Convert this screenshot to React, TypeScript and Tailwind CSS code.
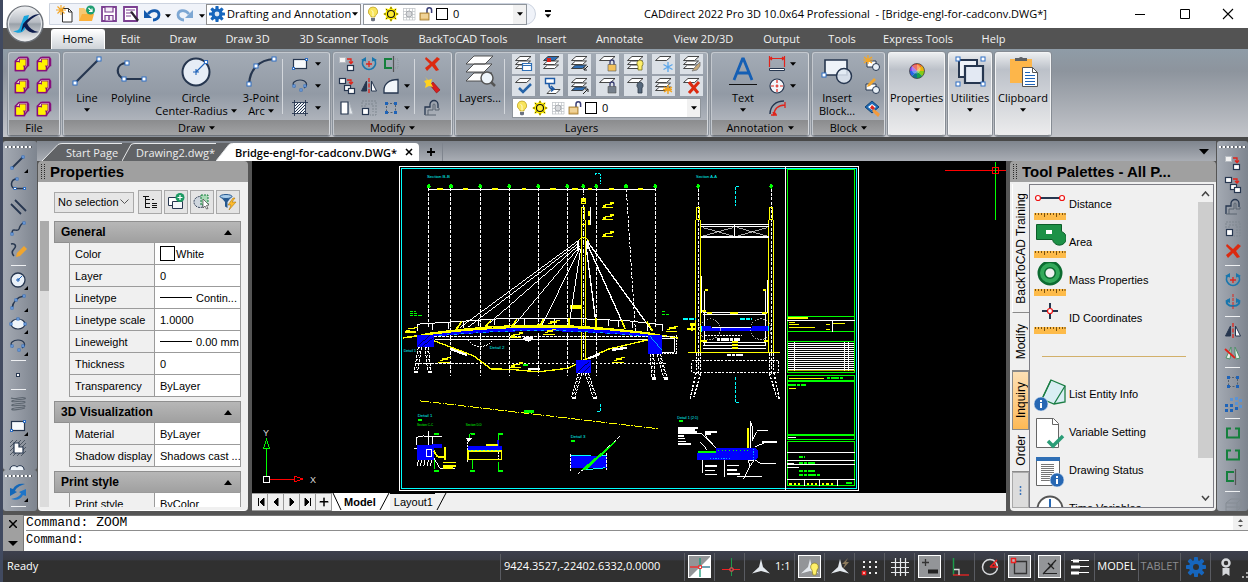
import type { ReactNode } from "react";

const NAVY = "#26364f";
const BLUE = "#1e63b8";
const RED = "#e0241b";
const GREEN = "#15803d";

/* ---------- shared drawing helpers ---------- */

function Svg({ s = 20, h, children, className = "" }: { s?: number; h?: number; children: ReactNode; className?: string }) {
  return (
    <svg width={s} height={h ?? s} viewBox={`0 0 ${s} ${h ?? s}`} fill="none" aria-hidden="true" className={`block shrink-0 ${className}`}>
      {children}
    </svg>
  );
}

function Handle({ x, y, r = 1.5 }: { x: number; y: number; r?: number }) {
  return <rect x={x - r} y={y - r} width={r * 2} height={r * 2} fill="#fff" stroke="#2f6fc4" />;
}

function Caret({ className = "" }: { className?: string }) {
  return (
    <svg width="6" height="4" viewBox="0 0 6 4" aria-hidden="true" className={`inline-block shrink-0 ${className}`}>
      <path d="M0 .3h6L3 3.8z" fill="currentColor" />
    </svg>
  );
}

/* ---------- general icons ---------- */

const Bulb = () => (
  <Svg s={14} h={16}>
    <path d="M7 1a4.6 4.6 0 0 0-2.8 8.3c.5.5.8 1 .8 1.7h4c0-.7.3-1.2.8-1.7A4.6 4.6 0 0 0 7 1z" fill="#f8e45c" stroke="#b79a16" strokeWidth=".7" />
    <path d="M5.5 4.5l1.5 1v5" stroke="#fffbd0" />
    <path d="M5 12h4v2.5l-1 .8H6l-1-.8z" fill="#6b7280" />
  </Svg>
);
const Sun = () => (
  <Svg s={16}>
    <path d="M8 0l2 3 3.6-.8L13 6l3 2-3 2 .6 3.8L10 13l-2 3-2-3-3.6.8L3 10 0 8l3-2-.6-3.8L6 3z" fill="#ffec00" />
    <circle cx="8" cy="8" r="3.5" fill="#ffee33" stroke="#111" strokeWidth="1.1" />
    <path d="M8 1v2M8 13v2M1 8h2M13 8h2M3 3l1.5 1.5M11.5 11.5L13 13M13 3l-1.5 1.5M4.5 11.5L3 13" stroke="#222" strokeWidth=".8" />
  </Svg>
);
const Freeze = () => (
  <Svg s={14}>
    <path d="M1.5 1v12M4.5 1v12M7.5 1v12M10.5 1v12M13 1v12M1 1.5h12M1 4.5h12M1 7.5h12M1 10.5h12M1 13h12" stroke="#c3c6ca" strokeWidth=".8" />
    <circle cx="7" cy="7" r="3" fill="#d7d9dc" stroke="#a8abb0" />
  </Svg>
);
const Unlock = () => (
  <Svg s={14} h={16}>
    <path d="M8 8V4a2.3 2.3 0 0 1 4.6 0v3" stroke="#3a3f77" strokeWidth="1.5" />
    <rect x="1" y="7" width="9" height="7" fill="#e8c27a" stroke="#9a7226" strokeWidth=".8" />
    <path d="M2 9h7M2 11h7" stroke="#f7e2b4" />
  </Svg>
);
const Swatch = () => <span className="block size-[12px] shrink-0 border border-black bg-white" />;

function GearIcon({ size = 16, color = "#1666bd", hole = "#dce8f5" }: { size?: number; color?: string; hole?: string }) {
  return (
    <svg width={size} height={size} viewBox="0 0 20 20" aria-hidden="true" className="block shrink-0">
      <g fill={color}>
        {[0, 45, 90, 135].map((a) => (
          <rect key={a} x="8" y="0" width="4" height="20" rx=".8" transform={`rotate(${a} 10 10)`} />
        ))}
        <circle cx="10" cy="10" r="7" />
      </g>
      <circle cx="10" cy="10" r="3" fill={hole} />
    </svg>
  );
}

const Copy1 = () => (
  <Svg s={18}>
    <rect x="1.5" y="2.5" width="6" height="5" fill="#f3f3f3" stroke="#b7bcc2" />
    <path d="M9 4h4v4M11 6.5l2 2 2-2" stroke={RED} strokeWidth="1.3" />
    <rect x="9.5" y="10.5" width="6" height="5" fill="#fff" stroke={NAVY} strokeWidth="1.2" />
  </Svg>
);
const Copy2 = () => (
  <Svg s={18}>
    <rect x="1.5" y="1.5" width="6" height="5" fill="#fff" stroke={NAVY} strokeWidth="1.2" />
    <path d="M9 3h4v3M11 5l2 2 2-2" stroke={RED} strokeWidth="1.3" />
    <rect x="6.5" y="8.5" width="6" height="5" fill="#fff" stroke={NAVY} strokeWidth="1.2" />
    <rect x="10.5" y="11.5" width="6" height="5" fill="#fff" stroke={NAVY} strokeWidth="1.2" />
  </Svg>
);
const Rotate = () => (
  <Svg s={18}>
    <path d="M3.5 4.5a6.5 6.5 0 1 0 11 0" stroke="#1976ad" strokeWidth="1.8" />
    <path d="M1 5l5-3v4.500zM17 5l-5-3v4.500z" fill="#1976ad" />
    <path d="M9 6v6M6 9h6" stroke={RED} strokeWidth="1.3" />
  </Svg>
);
const Rotate3D = () => (
  <Svg s={18}>
    <path d="M4 7c-3 3 0 6 5 6s8-3 5-6" stroke="#1976ad" strokeWidth="2" />
    <path d="M1 8l5-3v5zM17 8l-5-3v5z" fill="#1976ad" />
    <path d="M9 1v16" stroke={RED} strokeDasharray="3 1" />
  </Svg>
);
const Trim = () => (
  <Svg s={18}>
    <path d="M10 4H3v9h7" stroke={GREEN} strokeWidth="2" />
    <path d="M11.5 1v16" stroke="#555" strokeWidth="1.2" />
    <path d="M13 4h3v9h-3" stroke="#8b939a" strokeDasharray="1 1" />
  </Svg>
);
const BreakIcon = () => (
  <Svg s={18}>
    <path d="M7 4.5H3v9h12v-9h-4" stroke={GREEN} strokeWidth="2" />
  </Svg>
);
const Mirror = () => (
  <Svg s={18}>
    <path d="M6.5 4v10h-5z" fill={NAVY} stroke={NAVY} />
    <path d="M11.5 4v10h5z" fill="#f8fafc" stroke={NAVY} />
    <path d="M9 1v16" stroke={RED} strokeWidth="1.3" strokeDasharray="4 1.5" />
  </Svg>
);
const Mirror3D = () => (
  <Svg s={18}>
    <path d="M7 3l-5 11 4 1 1-6zM11 3l5 11-4 1-1-6z" fill="#e6efe9" stroke="#4f9068" />
    <path d="M1 5l10 9" stroke={RED} strokeWidth="1.8" />
  </Svg>
);
const Fillet = () => (
  <Svg s={18}>
    <path d="M2 16V13C2 7 7 2.5 16 2.5V16z" fill="#f2f6fa" stroke={NAVY} strokeWidth="1.3" />
  </Svg>
);
const Stretch = () => (
  <Svg s={18}>
    <path d="M11 3l4 12h-4z" fill="#e4e8ec" stroke="#b0b7bf" />
    <path d="M3 3h7v12H3z" fill="#fff" stroke={NAVY} strokeWidth="1.2" />
  </Svg>
);
const Scale = () => (
  <Svg s={18}>
    <path d="M2 8V2h14v14h-6M5 8V5h8v8" stroke="#7f878f" strokeDasharray="2 1" />
    <rect x="2.5" y="9.5" width="6" height="6" fill="#fff" stroke={NAVY} strokeWidth="1.2" />
  </Svg>
);
const ArrayIcon = () => (
  <Svg s={18}>
    <path d="M4.5 4.5h9v9h-9z" stroke="#55606c" strokeDasharray="2 1.5" />
    <path d="M3 3h3v3H3zM12 3h3v3h-3zM3 12h3v3H3zM12 12h3v3h-3z" fill={BLUE} />
  </Svg>
);
const ArrayDense = () => (
  <Svg s={18}>
    <path d="M1 9h3v3H1zM1 14h3v3H1zM6 9h3v3H6zM6 14h3v3H6zM11 12h3v3h-3z" fill={BLUE} />
    <path d="M6 3h3v3H6zM11 2h3v3h-3zM11 7h3v3h-3zM15 4h3v3h-3zM15 10h3v3h-3z" fill="#5b93d4" />
  </Svg>
);
const CrossRed = () => (
  <Svg s={18}>
    <path d="M3 2l6 5 5-5 3 2-5 5 4 6-3 1-4-5-5 5-2-3 5-4-5-5z" fill="#dc2a10" />
  </Svg>
);
const Explode = () => (
  <Svg s={18}>
    <path d="M7 8l3-3 7 8-3.500 3z" fill="#d81e1e" stroke="#8d1010" strokeWidth=".6" />
    <path d="M2 0l3 3 4-1-1 4 2 4-4-1-4 2 1-4-2-3 3-1z" fill="#ffd21f" />
  </Svg>
);
const Offset = () => (
  <Svg s={18}>
    <path d="M2 16V8h5V5.5a4 4 0 0 1 8 0V9" stroke={NAVY} strokeWidth="1.3" />
    <path d="M5 16v-5h5V6a1 1 0 0 1 2 0v5h4v-2M2 16h11" stroke="#5b6571" />
  </Svg>
);
const LineI = ({ big = false }: { big?: boolean }) =>
  big ? (
    <Svg s={32}>
      <path d="M4 28L28 4" stroke={NAVY} strokeWidth="2.2" />
      <Handle x={4} y={28} r={2} />
      <Handle x={28} y={4} r={2} />
    </Svg>
  ) : (
    <Svg s={18}>
      <path d="M3 14L14 3" stroke={NAVY} strokeWidth="1.8" />
      <Handle x={3} y={14} r={1} />
      <Handle x={14} y={3} r={1} />
    </Svg>
  );
const PolyI = () => (
  <Svg s={18}>
    <path d="M8 3C1 3 1 12 6 12.5h10" stroke={NAVY} strokeWidth="1.5" />
    <Handle x={8} y={3} r={1} />
    <Handle x={6} y={12.5} r={1} />
    <Handle x={15.5} y={12.5} r={1} />
  </Svg>
);
const Parallel = () => (
  <Svg s={18}>
    <path d="M2 6l10 10M6 2l11 11" stroke={NAVY} strokeWidth="1.8" />
    <path d="M4 4l11 11" stroke="#8a949f" strokeDasharray="1 2" />
  </Svg>
);
const Spline = () => (
  <Svg s={18}>
    <path d="M3 14c0-8 5-1 7-5 1-3 2-6 5-6" stroke={NAVY} strokeWidth="1.5" />
    <Handle x={3} y={14} r={1} />
    <Handle x={15} y={3} r={1} />
  </Svg>
);
const Sketch = () => (
  <Svg s={18}>
    <path d="M2 2c4-1 6 2 3 5s-2 5 0 7" stroke={NAVY} strokeWidth="1.5" />
    <path d="M7 15l1-4 7-7 3 3-7 7z" fill="#f0a52e" />
  </Svg>
);
const CircleS = () => (
  <Svg s={18}>
    <circle cx="9" cy="9" r="7" fill="#e9f0f8" stroke={NAVY} strokeWidth="1.3" />
    <path d="M9 7v4M7 9h4M9 9l4-4" stroke={BLUE} />
  </Svg>
);
const ArcS = () => (
  <Svg s={18}>
    <path d="M3 16C4 8 8 4 15 3" stroke={NAVY} strokeWidth="1.5" />
    <Handle x={3} y={15} r={1} />
    <Handle x={7} y={7} r={1} />
    <Handle x={15} y={3} r={1} />
  </Svg>
);
const EllipseI = () => (
  <Svg s={18}>
    <ellipse cx="9" cy="9" rx="7" ry="5" fill="#eef4fa" stroke={NAVY} strokeWidth="1.2" />
    <Handle x={2} y={9} r={1} />
    <Handle x={16} y={9} r={1} />
    <Handle x={9} y={4} r={1} />
  </Svg>
);
const EllArc = () => (
  <Svg s={18}>
    <path d="M4 10C-1 6 5 3 9 3c6 0 9 5 4 8" stroke={NAVY} strokeWidth="1.2" />
    <Handle x={3} y={9} r={1} />
    <Handle x={10} y={13} r={1} />
    <Handle x={14} y={9} r={1} />
  </Svg>
);
const PointI = () => (
  <Svg s={18}>
    <rect x="7.5" y="7.5" width="3" height="3" fill="#fff" stroke={NAVY} />
  </Svg>
);
const Helix = () => (
  <Svg s={18}>
    <path d="M2 3c4 2 11-2 14 0s-11 1-13 3 12-1 13 1-11 1-13 3 12-1 13 1-11 1-13 3 10 0 13-1" stroke="#5d6670" strokeWidth="1.1" />
  </Svg>
);
const RectI = () => (
  <Svg s={18}>
    <rect x="2.5" y="4.5" width="13" height="9" fill="#f6f9fc" stroke={NAVY} strokeWidth="1.2" />
    <Handle x={2.5} y={13.5} r={1} />
    <Handle x={15.5} y={4.5} r={1} />
  </Svg>
);
const Region = () => (
  <Svg s={18}>
    <path d="M1 4l3-3M1 8l7-7M1 12l11-11M1 16L16 1M4 17L17 4M8 17l9-9M12 17l5-5" stroke="#46505c" strokeWidth=".9" />
    <path d="M5 4h5v4h4v6H5z" fill="#fff" stroke={NAVY} strokeWidth="1.2" />
  </Svg>
);
const Hatch = () => (
  <Svg s={18}>
    <path d="M3.5 3.5h11v11h-11z" fill="#eef2f6" />
    <path d="M1 3.5h16M1 14.5h16M3.5 1v16M14.5 1v16" stroke={NAVY} strokeWidth=".9" />
    <path d="M4 7l3-3M4 10l6-6M4 13l9-9M6 14l8-8M9 14l5-5M12 14l2-2" stroke={NAVY} />
  </Svg>
);
const Cloud = () => (
  <Svg s={18}>
    <path d="M1 8a4 4 0 0 1 7-2 4 4 0 0 1 7 2v5H1z" fill="#eef4fa" stroke={NAVY} />
  </Svg>
);
const Regen = () => (
  <Svg s={20}>
    <path d="M17 2C11 1 7 3 5 7L2 6v8l7-4-2-1c1-3 4-5 10-7z" fill="#1367b8" />
    <path d="M3 17c6 2 10 0 12-4l3 1V7l-7 3 2 1.500C12 14 9 16 3 17z" fill="#1f75c8" />
  </Svg>
);
const Cube = () => (
  <Svg s={16}>
    <path d="M6 1.500h7l1.500 1.500v6.500H13L10.500 12" fill="#fff6a0" stroke="#86107c" strokeWidth="1.500" />
    <path d="M1.500 5L5 1.500h8.500V10L10 14.500H1.500z" fill="#fffbd6" stroke="#86107c" strokeWidth="1.500" />
    <rect x="1.500" y="5.500" width="9" height="9" fill="#fff200" stroke="#86107c" strokeWidth="1.500" />
    <rect x="5.500" y="3" width="6.500" height="7" fill="#fff200" stroke="#86107c" strokeWidth=".8" />
    <rect x="2.500" y="6.500" width="6.500" height="7" fill="#fff200" />
  </Svg>
);
const InfoDot = ({ x, y }: { x: number; y: number }) => (
  <g>
    <circle cx={x} cy={y} r="7" fill="#2667b3" stroke="#dbe7f3" strokeWidth=".6" />
    <rect x={x - 1} y={y - 1} width="2" height="5" fill="#fff" />
    <rect x={x - 1} y={y - 4} width="2" height="2" fill="#fff" />
  </g>
);

/* ---------- layer button icons ---------- */

function Stack({ fill = "#fff", kind }: { fill?: string; kind: string }) {
  const one = ["check", "lock", "off", "frost", "del", "unlock", "cur"].includes(kind);
  return (
    <Svg s={20} h={18}>
      {!one && <path d="M1.5 13.5l4-3.5h11l-4 3.5z" fill={kind === "dn" || kind === "up" ? "#2f6fb5" : "#fff"} stroke="#333" strokeWidth=".9" />}
      {!one && <path d="M1.5 9.5l4-3.5h11l-4 3.5z" fill="#fff" stroke="#333" strokeWidth=".9" />}
      {kind !== "cur" && <path d="M1.5 5.5L6 1.5h11l-4.5 4z" fill={fill} stroke="#333" strokeWidth=".9" />}
      {kind === "win" && <path d="M8.5 8.5h9v7h-9zM8.5 10.5h9" fill="#fff" stroke="#2f6fb5" strokeWidth="1.2" />}
      {kind === "iso" && <path d="M5 3h4v4H5z" fill={RED} />}
      {kind === "check" && <path d="M5 11l4 4 8-8" stroke="#2764a8" strokeWidth="2.5" />}
      {kind === "dn" && <path d="M18 11l-4 4m0-3v3h3" stroke="#222" />}
      {kind === "up" && <path d="M13 17l5-5m-3 0h3v3" stroke="#222" />}
      {(kind === "lock" || kind === "unlock") && (
        <g>
          <path d="M12 10V7a2 2 0 0 1 4 0v3" stroke="#34386c" strokeWidth="1.3" />
          <path d="M10 9.5h8V16h-8z" fill={kind === "lock" ? "#f2c15c" : "#76808c"} stroke="#555" strokeWidth=".6" />
        </g>
      )}
      {kind === "bulb" && <path d="M14 5a3.5 3.5 0 0 0-2 6v4h4v-4a3.5 3.5 0 0 0-2-6z" fill="#fff06a" stroke="#77701c" strokeWidth=".8" />}
      {kind === "off" && <path d="M14 5a3.5 3.5 0 0 0-2 6v5h4v-5a3.5 3.5 0 0 0-2-6z" fill="#56687c" stroke="#2f3b48" strokeWidth=".8" />}
      {kind === "frost" && <path d="M14 7v10M9.5 9.5l9 5M18.5 9.5l-9 5" stroke="#5aa6ea" strokeWidth="1.3" />}
      {kind === "thaw" && <path d="M14 8v9M10 10l8 5M18 10l-8 5M9 12.5h9" stroke="#f2a21b" strokeWidth="1.4" />}
      {kind === "brush" && <path d="M18 7l-5 5-3 4 5-1 3-4z" fill="#c7a878" stroke="#777" strokeWidth=".8" />}
      {kind === "del" && <path d="M7 5l9 11M17 5L7 16" stroke="#dc2a10" strokeWidth="3" />}
      {kind === "cur" && (
        <g>
          <path d="M5 16.500l4-4h9l-4 4z" fill="#fff" stroke="#333" strokeWidth=".9" />
          <path d="M3.500 1.500h9v5h-9z" fill="#fff" stroke="#1d5aa6" strokeWidth="1.400" />
          <path d="M7 7c0 4 2 5 4 5m-2-3l3 3-3 2.500" stroke="#1d5aa6" strokeWidth="1.600" />
        </g>
      )}
    </Svg>
  );
}

/* ---------- ribbon ---------- */

function Group({ label, className, caret = true, children }: { label: string; className: string; caret?: boolean; children: ReactNode }) {
  return (
    <section className={`flex h-[84px] shrink-0 flex-col overflow-hidden rounded-[3px] border border-[#c3c8ce] border-b-[#6f747b] border-r-[#d5d8dc] bg-linear-to-b from-[#a3abb5] via-[#929aa5] to-[#bfc2c8] shadow-[0_0_0_1px_#8b929b] ${className}`}>
      <div className="flex min-h-0 flex-1">{children}</div>
      <h2 className="flex h-[15px] shrink-0 items-center justify-center gap-1 bg-linear-to-b from-[#8b8c8e] to-[#a2a3a5] text-[11px] leading-[15px]">
        {label}
        {caret && <Caret />}
      </h2>
    </section>
  );
}

function BigButton({ icon, lines, className, caret = false, inlineCaret = false }: { icon: ReactNode; lines: string[]; className: string; caret?: boolean; inlineCaret?: boolean }) {
  return (
    <button type="button" className={`flex shrink-0 flex-col items-center whitespace-nowrap text-[11px] leading-[13px] ${className}`}>
      <span className="mb-[2px] flex h-[36px] items-center">{icon}</span>
      {lines.map((l, i) => (
        <span key={l} className="flex items-center gap-[3px]">
          {l}
          {inlineCaret && i === lines.length - 1 && <Caret />}
        </span>
      ))}
      {caret && <Caret className="mt-1" />}
    </button>
  );
}

function Cell({ label, children, className = "w-[22px]" }: { label: string; children?: ReactNode; className?: string }) {
  return (
    <button type="button" aria-label={label} className={`flex h-[22px] shrink-0 items-center justify-center ${className}`}>
      {children}
    </button>
  );
}

function Divider() {
  return <span className="my-[6px] w-px shrink-0 bg-[#d3d7dc]" />;
}

function CollapsedGroup({ icon, label, className }: { icon: ReactNode; label: string; className: string }) {
  return (
    <button type="button" className={`flex h-[84px] shrink-0 flex-col items-center overflow-hidden rounded-[3px] border border-[#f3f4f5] border-b-[#7d8288] bg-linear-to-b from-[#eceef0] via-[#bcc1c9] via-20% to-[#ececed] text-[11px] leading-[13px] shadow-[0_0_0_1px_#868c94] ${className}`}>
      <span className="mb-[2px] flex h-[36px] items-center">{icon}</span>
      <span>{label}</span>
      <Caret className="mt-1" />
    </button>
  );
}

const layerButtons: { label: string; kind: string; fill?: string }[] = [
  { label: "Layer states", kind: "win" },
  { label: "Isolate layer", kind: "iso", fill: "#2f6fb5" },
  { label: "Layer down", kind: "dn" },
  { label: "Lock layer", kind: "lock" },
  { label: "Layer on", kind: "bulb" },
  { label: "Freeze layer", kind: "frost" },
  { label: "Match layer", kind: "brush" },
  { label: "Make current", kind: "check" },
  { label: "Move to current layer", kind: "cur" },
  { label: "Layer up", kind: "up" },
  { label: "Unlock layer", kind: "unlock" },
  { label: "Layer off", kind: "off" },
  { label: "Thaw layers", kind: "thaw" },
  { label: "Delete layer", kind: "del" },
];

function LayerCombo({ className, label }: { className: string; label: string }) {
  return (
    <div className={`flex items-center gap-[3px] border border-[#8f959c] bg-white pl-[2px] ${className}`}>
      <Bulb />
      <Sun />
      <Freeze />
      <Unlock />
      <Swatch />
      <select aria-label={label} className="h-full min-w-0 flex-1 appearance-none bg-transparent pl-[2px] text-[11px] outline-none">
        <option>0</option>
      </select>
      <span className="flex h-full w-[13px] items-center justify-center bg-[#f1f1f1]">
        <Caret />
      </span>
    </div>
  );
}

function Ribbon() {
  return (
    <div className="flex h-[88px] shrink-0 gap-[3px] overflow-hidden bg-linear-to-b from-[#8f9ca7] via-[#8d949d] via-25% to-[#c3c5ca] pl-[5px] pt-[3px]">
      <Group label="File" className="w-[52px]" caret={false}>
        <div className="grid grid-cols-2 pl-[2px]">
          {["New", "Open", "Save", "Import", "Export", "Plot"].map((n) => (
            <Cell key={n} label={n}>
              <Cube />
            </Cell>
          ))}
        </div>
      </Group>

      <Group label="Draw" className="w-[267px]">
        <BigButton className="w-[46px]" caret lines={["Line"]} icon={<LineI big />} />
        <BigButton
          className="w-[42px]"
          lines={["Polyline"]}
          icon={
            <Svg s={32}>
              <path d="M12 8C0 8 0 22 10 24h18" stroke={NAVY} strokeWidth="2.2" />
              <Handle x={12} y={8} r={2} />
              <Handle x={9} y={24} r={2} />
              <Handle x={29} y={24} r={2} />
            </Svg>
          }
        />
        <BigButton
          className="w-[88px]"
          inlineCaret
          lines={["Circle", "Center-Radius"]}
          icon={
            <Svg s={32}>
              <circle cx="16" cy="17" r="13.5" fill="#e6edf6" stroke={NAVY} strokeWidth="2" />
              <path d="M16 14v6M13 17h6M16 17l10-10" stroke={BLUE} strokeWidth="1.1" />
              <Handle x={26} y={7} r={1.5} />
            </Svg>
          }
        />
        <BigButton
          className="w-[42px]"
          inlineCaret
          lines={["3-Point", "Arc"]}
          icon={
            <Svg s={32}>
              <path d="M4 29C5 14 14 5 29 4" stroke={NAVY} strokeWidth="2.2" />
              <Handle x={4} y={29} r={2} />
              <Handle x={11} y={11} r={2} />
              <Handle x={29} y={4} r={2} />
            </Svg>
          }
        />
        <Divider />
        <div className="ml-[4px] grid grid-cols-[26px_10px] content-start">
          <Cell label="Rectangle" className="w-[26px]"><RectI /></Cell>
          <Cell label="Rectangle options" className="w-[10px]"><Caret /></Cell>
          <Cell label="Ellipse arc" className="w-[26px]"><EllArc /></Cell>
          <Cell label="Ellipse options" className="w-[10px]"><Caret /></Cell>
          <Cell label="Hatch" className="w-[26px]"><Hatch /></Cell>
          <Cell label="Hatch options" className="w-[10px]"><Caret /></Cell>
        </div>
      </Group>

      <Group label="Modify" className="w-[119px]">
        <div className="grid grid-cols-[22px_22px_22px_10px] content-start pl-[2px]">
          <Cell label="Move"><Copy1 /></Cell>
          <Cell label="Rotate"><Rotate /></Cell>
          <Cell label="Trim"><Trim /></Cell>
          <span />
          <Cell label="Copy"><Copy2 /></Cell>
          <Cell label="Mirror"><Mirror /></Cell>
          <Cell label="Fillet"><Fillet /></Cell>
          <Cell label="Fillet options" className="w-[10px]"><Caret /></Cell>
          <Cell label="Stretch"><Stretch /></Cell>
          <Cell label="Scale"><Scale /></Cell>
          <Cell label="Array"><ArrayIcon /></Cell>
          <Cell label="Array options" className="w-[10px]"><Caret /></Cell>
        </div>
        <span className="w-[2px]" />
        <Divider />
        <div className="ml-[6px]">
          <Cell label="Erase"><CrossRed /></Cell>
          <Cell label="Explode"><Explode /></Cell>
          <Cell label="Offset"><Offset /></Cell>
        </div>
      </Group>

      <Group label="Layers" className="w-[253px]" caret={false}>
        <BigButton
          className="w-[48px]"
          lines={["Layers..."]}
          icon={
            <Svg s={32} h={34}>
              <path d="M2 27l8-8h18l-8 8zM2 18l8-8h18l-8 8zM2 10l8-8h19l-8 8z" fill="#fff" stroke="#444" strokeWidth=".9" />
              <circle cx="23" cy="24" r="6" fill="#eef5fb" stroke="#555" strokeWidth="1.5" />
              <path d="M27 28l4 4" stroke="#555" strokeWidth="2.5" />
            </Svg>
          }
        />
        <Divider />
        <div className="ml-[7px] flex flex-col pt-px">
          <div className="grid grid-cols-7 gap-x-[5px] gap-y-[2px]">
            {layerButtons.map((b) => (
              <button key={b.kind} type="button" aria-label={b.label} className="flex h-[20px] w-[23px] items-center justify-center bg-[#dbe0e6]">
                <Stack kind={b.kind} fill={b.fill} />
              </button>
            ))}
          </div>
          <LayerCombo label="Current layer" className="mt-[2px] h-[20px] w-[189px]" />
        </div>
      </Group>

      <Group label="Annotation" className="w-[98px]">
        <BigButton
          className="ml-[8px] w-[46px]"
          caret
          lines={["Text"]}
          icon={
            <Svg s={30}>
              <path d="M6 24L14.5 3h1L24 24M9 17h12" stroke="#155fb4" strokeWidth="2.8" />
              <path d="M1 28.5h28" stroke="#111" />
            </Svg>
          }
        />
        <div className="grid grid-cols-[22px_10px] content-start">
          <Cell label="Dimension">
            <Svg s={18}>
              <path d="M1.5 1v11M16.5 1v11M1.5 3.5h15M4 2L2 3.5 4 5M14 2l2 1.5L14 5" stroke={RED} strokeWidth="1.2" />
              <path d="M1.5 13.5h15v2h-15z" fill="#fff" stroke={NAVY} />
            </Svg>
          </Cell>
          <Cell label="Dimension options" className="w-[10px]"><Caret /></Cell>
          <Cell label="Center mark">
            <Svg s={18}>
              <circle cx="9" cy="9" r="7" fill="#f3f6fa" stroke={NAVY} strokeWidth="1.2" />
              <path d="M9 3v12M3 9h12" stroke={RED} strokeDasharray="3 1.5" strokeWidth="1.2" />
            </Svg>
          </Cell>
          <Cell label="Center mark options" className="w-[10px]"><Caret /></Cell>
          <Cell label="Arc length">
            <Svg s={18}>
              <path d="M2 15C2 7 8 2 16 2" stroke={NAVY} strokeWidth="1.5" />
              <path d="M6 16c0-6 4-10 11-10M17 3v6M3 16h6M5 13l1 3 2-2" stroke={RED} strokeWidth="1.3" />
            </Svg>
          </Cell>
        </div>
      </Group>

      <Group label="Block" className="w-[73px]">
        <BigButton
          className="w-[48px]"
          lines={["Insert", "Block..."]}
          icon={
            <Svg s={32}>
              <path d="M4 5h22v15H4z" fill="#eef3f9" stroke={NAVY} strokeWidth="1.6" />
              <circle cx="23" cy="21" r="7.5" fill="#e1e9f3" fillOpacity=".85" stroke={NAVY} strokeWidth="1.5" />
              <Handle x={3} y={20} r={2} />
            </Svg>
          }
        />
        <div>
          <Cell label="Create block">
            <Svg s={18}>
              <path d="M4 6h9v6H4z" fill="#fff" stroke={NAVY} />
              <circle cx="13" cy="12" r="3.5" fill="#e8eff6" stroke={NAVY} />
              <path d="M5 0v9M1 2l8 6M9 2L1 8M0 5h10" stroke="#f5a623" strokeWidth="1.2" />
            </Svg>
          </Cell>
          <Cell label="Edit block">
            <Svg s={18}>
              <path d="M3 7h10v6H3z" fill="#fff" stroke={NAVY} />
              <circle cx="13" cy="13" r="3.5" fill="#e8eff6" stroke={NAVY} />
              <path d="M4 10l1-3 6-6 2 2-6 6z" fill="#f0a52e" />
            </Svg>
          </Cell>
          <Cell label="Block attributes">
            <Svg s={18}>
              <path d="M2 8l7-6 7 6-7 6z" fill="#1f6bb5" stroke="#114477" />
              <path d="M5 8l4-3 4 3-4 3z" fill="#fff" />
              <path d="M9 6l3 3-2 2-3-2z" fill={RED} />
              <path d="M11 10l6 5-2 3-6-6z" fill="#f39a3d" />
            </Svg>
          </Cell>
        </div>
      </Group>

      <CollapsedGroup
        label="Properties"
        className="w-[57px]"
        icon={
          <Svg s={18}>
            {["#f97316", "#eab308", "#84cc16", "#16a34a", "#0e7490", "#2563eb", "#7c3aed", "#dc2626"].map((c, i) => (
              <path key={c} d="M9 9V1.500a7.500 7.500 0 0 1 5.300 2.200z" fill={c} transform={`rotate(${i * 45} 9 9)`} />
            ))}
            <circle cx="9" cy="9" r="7.5" stroke="#444" strokeWidth=".8" />
            <circle cx="8" cy="7" r="4.5" fill="#fff" fillOpacity=".35" />
          </Svg>
        }
      />
      <CollapsedGroup
        label="Utilities"
        className="w-[44px]"
        icon={
          <Svg s={32}>
            <path d="M5 5h18v17H5z" fill="#eef2f8" stroke={NAVY} strokeWidth="2" />
            <path d="M11 11h18v17H11z" fill="#e3e9f3" stroke={NAVY} strokeWidth="2.2" />
            <Handle x={4} y={4} r={2} />
            <Handle x={29} y={4} r={2} />
            <Handle x={4} y={29} r={2} />
            <Handle x={29} y={29} r={2} />
          </Svg>
        }
      />
      <CollapsedGroup
        label="Clipboard"
        className="w-[56px]"
        icon={
          <Svg s={32}>
            <path d="M3 4h22v24H3z" fill="#fdb64a" />
            <path d="M8 6V3h4a2.5 2.5 0 0 1 4 0h4v3z" fill="#5d6064" />
            <path d="M15.5 12.5h10l5 5v14h-15z" fill="#fff" stroke="#555" />
            <path d="M25.5 12.5v5h5" stroke="#555" />
            <path d="M18 17.5h5M18 20.5h10M18 23.5h10M18 26.5h10M18 29.5h10" stroke="#1e63b8" />
          </Svg>
        }
      />
    </div>
  );
}

/* ---------- title bar & menu ---------- */

function TitleBar() {
  return (
    <header className="relative flex h-[28px] shrink-0 items-center bg-white pl-[46px]">
      <button type="button" aria-label="Application menu" className="absolute left-[3px] top-[5px] z-10 size-[38px]">
        <svg viewBox="0 0 38 38" className="block size-full" aria-hidden="true">
          <defs>
            <linearGradient id="orb" x1="0" y1="0" x2="0" y2="1">
              <stop offset="0" stopColor="#f2f3f5" />
              <stop offset=".45" stopColor="#b7bcc3" />
              <stop offset=".5" stopColor="#9aa1a9" />
              <stop offset="1" stopColor="#f4f5f6" />
            </linearGradient>
          </defs>
          <circle cx="19" cy="19" r="18" fill="url(#orb)" stroke="#6b7077" strokeWidth="1.2" />
          <circle cx="19" cy="19" r="16.5" fill="none" stroke="#e9ebee" />
          <path d="M18 11l5-1-4 14c-2 4-7 5-12 2 4 0 6-1 7-4z" fill="#18a5dd" />
          <path d="M34 9c-7 3-12 7-15 12l-4 6 2-8C21 14 27 9 34 9zM18 19l3-1c2 5 6 8 12 9-7 2-12 0-15-6z" fill="#0d1c4d" />
        </svg>
      </button>

      <div className="flex h-[22px] shrink-0 items-center rounded-r-full border border-[#ccd3df] bg-[#f0f3f9] pl-[6px] pr-[8px]">
        <button type="button" aria-label="New" className="w-[22px]">
          <Svg s={18}>
            <path d="M6.5 3.5h6l3.5 3.5v10H6.5z" fill="#fff" stroke="#333" />
            <path d="M12.5 3.5V7H16" stroke="#333" />
            <path d="M5 0v10M1.5 1.5l7 7M8.5 1.5l-7 7M0 5h10" stroke="#f5a623" strokeWidth="1.1" />
          </Svg>
        </button>
        <button type="button" aria-label="Open" className="w-[23px]">
          <Svg s={18}>
            <path d="M1 3h5l2 2h5v11H1z" fill="#f7c873" />
            <path d="M4 9h12l-2 7H1z" fill="#fbb03b" />
            <circle cx="12.5" cy="5" r="4.5" fill="#1f9e72" />
            <path d="M10.5 3l3.5 3.5m0-3v3h-3" stroke="#fff" strokeWidth="1.2" />
          </Svg>
        </button>
        <button type="button" aria-label="Save" className="w-[22px]">
          <Svg s={16}>
            <path d="M1 1h14v14H1z" fill="#fff" stroke="#7b3f91" strokeWidth="1.8" />
            <path d="M4 1h8v5H4zM4 9.500h8V15H4z" fill="#f4edf7" stroke="#7b3f91" strokeWidth="1.2" />
            <path d="M8 10v4" stroke="#7b3f91" strokeWidth="1.5" />
          </Svg>
        </button>
        <button type="button" aria-label="Save as" className="w-[20px]">
          <Svg s={17} h={16}>
            <path d="M1 1h13v14H1z" fill="#fff" stroke="#7b3f91" strokeWidth="1.8" />
            <path d="M3 4h9M3 7h7M3 10h5" stroke="#7b3f91" />
            <path d="M7 6l2-1 7 9-2 1.500z" fill="#2c2330" />
          </Svg>
        </button>
        <button type="button" aria-label="Undo" className="w-[20px]">
          <Svg s={18}>
            <path d="M5 9c4-5 11-4 11 1 0 3-3 5-6 5" stroke="#1259ad" strokeWidth="2.8" />
            <path d="M1 5v8h8z" fill="#1259ad" />
          </Svg>
        </button>
        <button type="button" aria-label="Undo list" className="w-[10px]"><Caret /></button>
        <button type="button" aria-label="Redo" className="w-[24px] pl-[3px]">
          <Svg s={18}>
            <path d="M13 9C9 4 2 5 2 10c0 3 3 5 6 5" stroke="#7da7d3" strokeWidth="2.8" />
            <path d="M17 5v8H9z" fill="#7da7d3" />
          </Svg>
        </button>
        <button type="button" aria-label="Redo list" className="w-[9px]"><Caret /></button>
        <div className="flex h-[21px] w-[155px] items-center border border-[#8f8f8f] bg-white pl-[2px]">
          <GearIcon />
          <select aria-label="Workspace" className="h-full min-w-0 flex-1 appearance-none bg-white pl-[2px] text-[11px] outline-none">
            <option>Drafting and Annotation</option>
          </select>
          <Caret className="mr-[2px]" />
        </div>
        <LayerCombo label="Layer" className="ml-[2px] h-[21px] w-[164px]" />
      </div>
      <button type="button" aria-label="Customize quick access" className="ml-[8px] flex w-[8px] shrink-0 flex-col items-center">
        <span className="mb-[2px] h-[2px] w-[6px] bg-black" />
        <Caret />
      </button>
      <h1 className="ml-[92px] min-w-0 flex-1 truncate whitespace-pre text-[11px]">CADdirect 2022 Pro 3D 10.0x64 Professional  - [Bridge-engl-for-cadconv.DWG*]</h1>
      <button type="button" aria-label="Minimize" className="flex w-[45px] justify-center">
        <Svg s={12}><path d="M1 6.5h10" stroke="#000" /></Svg>
      </button>
      <button type="button" aria-label="Maximize" className="flex w-[45px] justify-center">
        <Svg s={12}><path d="M1.5 1.5h9v9h-9z" stroke="#000" /></Svg>
      </button>
      <button type="button" aria-label="Close" className="flex w-[41px] justify-center">
        <Svg s={12}><path d="M1 1l10 10M11 1L1 11" stroke="#000" strokeWidth="1.1" /></Svg>
      </button>
    </header>
  );
}

const menuTabs: [string, string][] = [
  ["Edit", "w-[50px]"],
  ["Draw", "w-[55px]"],
  ["Draw 3D", "w-[74px]"],
  ["3D Scanner Tools", "w-[119px]"],
  ["BackToCAD Tools", "w-[119px]"],
  ["Insert", "w-[58px]"],
  ["Annotate", "w-[78px]"],
  ["View 2D/3D", "w-[90px]"],
  ["Output", "w-[66px]"],
  ["Tools", "w-[55px]"],
  ["Express Tools", "w-[97px]"],
  ["Help", "w-[54px]"],
];

function MenuBar() {
  return (
    <nav className="flex h-[21px] shrink-0 items-end bg-[#535353] pl-[48px] text-[11px] text-[#f2f2f2]">
      <button type="button" className="h-[20px] w-[54px] rounded-t-[3px] border border-b-0 border-white bg-linear-to-b from-white to-[#ced3d8] text-black">Home</button>
      {menuTabs.map(([t, w]) => (
        <button key={t} type="button" className={`h-[20px] shrink-0 whitespace-nowrap pl-px ${w}`}>{t}</button>
      ))}
    </nav>
  );
}

/* ---------- document tabs ---------- */

function SlantEdge({ w, fill, back }: { w: number; fill: string; back: string }) {
  return (
    <svg width={w} height="18" viewBox={`0 0 ${w} 18`} aria-hidden="true" className="block shrink-0">
      <path d="M0 0h30v18H0z" fill={back} />
      <path d={`M0 18L${w - 4} 1.500Q${w - 2} 0 ${w} 0V18z`} fill={fill} />
      <path d={`M0 18L${w - 4} 1.500Q${w - 2} .5 ${w} .5`} fill="none" stroke="#e6e8ea" />
    </svg>
  );
}

function DocTabs() {
  return (
    <div className="flex h-[20px] shrink-0 items-end bg-linear-to-b from-[#7f858e] to-[#a9adb4] pl-[5px] text-[11px] text-[#ededed]">
      <div className="flex h-[18px] items-center">
        <SlantEdge w={20} fill="#616366" back="transparent" />
        <button type="button" className="h-[18px] w-[60px] whitespace-nowrap border-t border-[#e6e8ea] bg-[#616366] leading-[17px]">Start Page</button>
        <SlantEdge w={13} fill="#616366" back="#616366" />
        <button type="button" className="h-[18px] w-[81px] whitespace-nowrap border-t border-[#e6e8ea] bg-[#616366] leading-[17px]">Drawing2.dwg*</button>
        <SlantEdge w={17} fill="#fff" back="#616366" />
        <button type="button" className="h-[18px] w-[166px] whitespace-nowrap bg-white text-[11px] font-semibold leading-[17px] text-black">Bridge-engl-for-cadconv.DWG*</button>
        <button type="button" aria-label="Close drawing" className="flex h-[18px] w-[20px] items-center justify-center rounded-tr-[4px] bg-white">
          <Svg s={8}><path d="M1 1l6 6M7 1L1 7" stroke="#000" strokeWidth="1.5" /></Svg>
        </button>
        <button type="button" aria-label="New drawing" className="flex h-[18px] w-[24px] items-center justify-center border-r border-[#7f858e]">
          <Svg s={10}><path d="M5 1v8M1 5h8" stroke="#000" strokeWidth="1.8" /></Svg>
        </button>
      </div>
      <button type="button" aria-label="Drawing list" className="mb-[6px] ml-auto mr-[7px] text-black">
        <svg width="10" height="6" viewBox="0 0 10 6" aria-hidden="true" className="block"><path d="M0 0h10L5 5.5z" /></svg>
      </button>
    </div>
  );
}

/* ---------- side toolbars ---------- */

type Tool = [string, ReactNode, boolean?] | null;

const leftTools: Tool[] = [
  ["Line", <LineI />, true],
  ["Polyline", <PolyI />],
  ["Parallel lines", <Parallel />],
  ["Spline", <Spline />],
  ["Sketch", <Sketch />],
  null,
  ["Circle", <CircleS />, true],
  ["Arc", <ArcS />, true],
  ["Ellipse", <EllipseI />, true],
  ["Elliptical arc", <EllArc />, true],
  null,
  ["Point", <PointI />],
  null,
  ["Helix", <Helix />],
  ["Rectangle", <RectI />, true],
  ["Region", <Region />],
  ["Revision cloud", <Cloud />],
];

const rightTools: Tool[] = [
  ["Move", <Copy1 />],
  ["Copy", <Copy2 />],
  ["Offset", <Offset />],
  ["Scale", <Scale />],
  ["Erase", <CrossRed />],
  null,
  ["Rotate", <Rotate />],
  ["Rotate 3D", <Rotate3D />],
  null,
  ["Mirror", <Mirror />],
  ["Mirror 3D", <Mirror3D />],
  null,
  ["Array", <ArrayIcon />],
  ["Array 3D", <ArrayDense />],
  null,
  ["Break", <BreakIcon />],
  ["Break at point", <BreakIcon />],
  ["Trim", <Trim />],
  null,
  ["Box", <Svg s={18}><path d="M2 6l5-4h10v8l-4 4H2zM2 6h11v8M13 6l4-4M2 10h15" stroke="#858c94" /></Svg>],
];

function Grip() {
  return <span className="mx-auto mt-[5px] block h-[2px] w-[27px] shrink-0 bg-[repeating-linear-gradient(90deg,#fff_0_2px,#55595f_2px_3px,transparent_3px_4px)]" />;
}

function ToolStrip({ tools }: { tools: Tool[] }) {
  return (
    <div className="flex min-h-0 flex-1 flex-col items-center overflow-hidden">
      <Grip />
      <span className="h-[4px] shrink-0" />
      {tools.map((t, i) =>
        t === null ? (
          <span key={i} className="flex h-[7px] shrink-0 items-center"><span className="h-px w-[15px] bg-[#eef0f2]" /></span>
        ) : (
          <button key={t[0]} type="button" aria-label={t[0]} className="relative flex h-[22px] w-[20px] shrink-0 items-center justify-center">
            {t[1]}
            {t[2] && (
              <svg width="4" height="4" viewBox="0 0 4 4" aria-hidden="true" className="absolute bottom-[1px] right-0"><path d="M4 0v4H0z" /></svg>
            )}
          </button>
        ),
      )}
    </div>
  );
}

/* ---------- properties panel ---------- */

function Ruled() {
  return <span className="mr-[4px] inline-block h-px w-[32px] bg-black align-middle" />;
}

const propertySections: { title: string; rows: [string, ReactNode][] }[] = [
  {
    title: "General",
    rows: [
      ["Color", <span className="flex items-center gap-px"><span className="size-[15px] border border-black bg-white" />White</span>],
      ["Layer", "0"],
      ["Linetype", <span className="flex items-center"><Ruled />Contin...</span>],
      ["Linetype scale", "1.0000"],
      ["Lineweight", <span className="flex items-center"><Ruled />0.00 mm</span>],
      ["Thickness", "0"],
      ["Transparency", "ByLayer"],
    ],
  },
  { title: "3D Visualization", rows: [["Material", "ByLayer"], ["Shadow display", "Shadows cast ..."]] },
  { title: "Print style", rows: [["Print style", "ByColor"]] },
];

function PanelTitle({ children }: { children: ReactNode }) {
  return (
    <header className="flex h-[21px] shrink-0 items-center rounded-t-[4px] bg-[#a0a0a0] font-['Liberation_Sans',sans-serif]">
      <Svg s={4} h={16} className="ml-[3px] mr-[5px]">
        <path d="M.5 0v16M3.5 0v16" stroke="#2b2b2b" strokeDasharray="1 1" />
      </Svg>
      <h2 className="truncate text-[15px] font-bold leading-[20px]">{children}</h2>
    </header>
  );
}

function PropertiesPanel() {
  const btn = "flex h-[24px] w-[24px] items-center justify-center border border-[#a9a9a9] bg-[#e4e4e4]";
  return (
    <aside className="flex w-[210px] shrink-0 flex-col overflow-hidden font-['Liberation_Sans',sans-serif]">
      <PanelTitle>Properties</PanelTitle>
      <div className="flex min-h-0 flex-1 flex-col overflow-hidden rounded-b-[4px] border-b border-white bg-[#f0f0f0] pb-[3px]">
        <div className="flex shrink-0 items-center gap-[2px] pb-[7px] pl-[16px] pt-[8px]">
          <div className="mr-[2px] flex h-[21px] w-[80px] items-center border border-[#a9a9a9] bg-[#e6e6e6] pr-[4px]">
            <select aria-label="Selection" className="min-w-0 flex-1 appearance-none bg-transparent pl-[3px] text-[11px] outline-none">
              <option>No selection</option>
            </select>
            <Svg s={9} h={6}><path d="M.5 .5l4 4 4-4" stroke="#555" /></Svg>
          </div>
          <button type="button" aria-label="Tree view" className={btn}>
            <Svg s={16}><path d="M1 2.5h6M3.5 2v12M3.5 5.5H8M3.5 9.500H8M3.5 13.500H8M10 5.500h2M10 9.500h5M10 11.500h5M10 13.500h5" stroke="#111" /></Svg>
          </button>
          <button type="button" aria-label="Add to selection" className={btn}>
            <Svg s={18}>
              <path d="M1.5 4.5h9v8h-9z" stroke={NAVY} fill="#fff" /><path d="M5.5 8.5h10v7h-10z" fill="#f3f6fa" stroke={NAVY} />
              <circle cx="13" cy="4.5" r="4.5" fill="#1d9a63" /><path d="M13 2v5M10.5 4.5h5" stroke="#fff" strokeWidth="1.2" />
            </Svg>
          </button>
          <button type="button" aria-label="Select objects" className={btn}>
            <Svg s={18}>
              <ellipse cx="7" cy="9" rx="6" ry="5.5" fill="#cfd6de" stroke={NAVY} strokeDasharray="2 1" />
              <path d="M8 2h7v10H8z" fill="#a9d9b6" stroke={GREEN} strokeDasharray="2 1" />
              <path d="M10 6l6 6-2.5.5 1.5 3-1.5.5-1.500-3L10 15z" fill="#fff" stroke="#444" strokeWidth=".7" />
            </Svg>
          </button>
          <button type="button" aria-label="Quick select" className={btn}>
            <Svg s={18}>
              <path d="M1 3h12L8.500 9v6L6 13.500V9z" fill="#26588f" /><ellipse cx="7" cy="3.5" rx="6" ry="2" fill="#a9cdeb" stroke="#26588f" />
              <path d="M14 5l-5 7h3l-2 5 7-8h-4l3-4z" fill="#fdbb2d" stroke="#a06a00" strokeWidth=".5" />
            </Svg>
          </button>
        </div>
        <div className="flex min-h-0 flex-1">
          <div className="ml-[2px] mr-[5px] w-[9px] shrink-0 bg-[#dcdcdc]"><div className="h-[70px] bg-[#ababab]" /></div>
          <div className="w-[187px] overflow-hidden text-[11px]">
            {propertySections.map((s) => (
              <section key={s.title} className="mb-[4px]">
                <h3 className="h-[22px] border border-[#8f8f8f] bg-linear-to-b from-[#b7b7b7] to-[#a0a0a0] text-[12px] font-bold">
                  <button type="button" className="flex h-[20px] w-full items-center justify-between pl-[6px] pr-[8px]">
                    {s.title}
                    <svg width="8" height="5" viewBox="0 0 8 5" aria-hidden="true"><path d="M0 5h8L4 0z" /></svg>
                  </button>
                </h3>
                <table className="-mt-px ml-[15px] w-[172px] table-fixed border-collapse">
                  <tbody>
                    {s.rows.map(([k, v]) => (
                      <tr key={k} className="h-[22px]">
                        <th scope="row" className="w-[85px] overflow-hidden whitespace-nowrap border border-[#9b9b9b] bg-[#f0f0f0] p-0 pl-[5px] text-left font-normal leading-[20px]">{k}</th>
                        <td className="overflow-hidden whitespace-nowrap border border-[#9b9b9b] bg-white p-0 pl-[5px] leading-[20px]">{v}</td>
                      </tr>
                    ))}
                  </tbody>
                </table>
              </section>
            ))}
          </div>
        </div>
      </div>
    </aside>
  );
}

/* ---------- bridge drawing ---------- */

const W = "#ffffff";
const Y = "#ffff00";
const C = "#00ffff";
const G = "#00ff00";
const B = "#0000ff";

function Note({ x, y }: { x: number; y: number }) {
  return <path d={`M${x} ${y}h34M${x + 4} ${y - 5}h10M${x + 10} ${y - 10}h20M${x + 26} ${y - 14}h12`} stroke={Y} strokeWidth="4" />;
}

function Legs({ x, y, a, b }: { x: number; y: number; a: number; b: number }) {
  return (
    <g stroke={W} strokeWidth="3" strokeDasharray="9 3">
      <path d={`M${x - 14} ${y}L${x - 14 + a} ${y + 72}M${x - 4} ${y}L${x - 4 + a} ${y + 72}`} />
      <path d={`M${x + 6} ${y}L${x + 6 + b} ${y + 72}M${x + 16} ${y}L${x + 16 + b} ${y + 72}`} />
      <path d={`M${x - 9} ${y}L${x - 9 + a} ${y + 66}M${x + 11} ${y}L${x + 11 + b} ${y + 66}`} strokeDasharray="4 8" />
      <path d={`M${x - 14 + a} ${y + 74}h12M${x + 6 + b} ${y + 74}h12`} strokeWidth="7" strokeDasharray="none" />
    </g>
  );
}

function Elevation() {
  const axes = [101, 168, 256, 343, 430, 517, 565, 604, 693, 781];
  return (
    <g transform="translate(395 160) scale(.33333)">
      <text x="96" y="49" fill={C} fontSize="13" fontFamily="Liberation Sans">Section B-B</text>
      <path d="M602 40v-4h14v8M616 46v22" stroke={C} strokeWidth="3" strokeDasharray="7 3" />
      <path d="M101 85H781" stroke={W} strokeWidth="3" />
      {axes.map((x) => (
        <g key={x}>
          <circle cx={x} cy="74" r="6" fill={G} />
          {x !== 693 && <path d={`M${x} 80V${x === 101 || x === 781 ? 500 : 645}`} stroke={W} strokeWidth="3" strokeDasharray={x === 565 ? "14 4 4 4" : "10 4"} />}
        </g>
      ))}
      <path d="M694 85L722 520" stroke={W} strokeWidth="3" strokeDasharray="8 5" />
      <path d="M126 83h18M204 83h14M292 83h16M380 83h14M466 83h18M532 83h18M580 83h12M642 83h16M730 83h14" stroke={Y} strokeWidth="4" />
      <path d="M559 112h14v14h-14zM561 175v-37h9v37M559 175V596M572 175V596M559 190h13M528 432h30v10h-30z" stroke={Y} strokeWidth="3" fill="none" />
      <path d="M528 436h30M560 118h12M583 150v14M583 176v14" stroke={Y} strokeWidth="8" />
      <path d="M586 138v54" stroke={W} strokeWidth="3" />
      <path d="M548 240q17-24 34 0" stroke={Y} strokeWidth="3" fill="none" />
      <Note x={620} y={139} />
      <Note x={620} y={175} />
      <Note x={620} y={226} />
      <g stroke={W} strokeWidth="3">
        <path d="M552 236L195 498M552 244L218 498M553 250L270 496M554 255L355 494M555 260L440 492M557 262L522 490" />
        <path d="M576 238L770 506M577 248L690 500M574 260L604 492" strokeWidth="4" />
        <path d="M550 240v28M578 240v24" strokeWidth="7" />
      </g>
      <path d="M68 510V488L160 482L343 470H520L700 478L803 490v20" stroke={W} strokeWidth="3" fill="none" />
      <path d="M112 486v20M160 482v22M206 480v20M250 477v18M298 474v18M390 470v20M480 470v20M640 475v20M670 477v20M712 480v20M758 486v22" stroke={W} strokeWidth="3" />
      <path d="M200 480l-18 26M288 476l-20 24M365 474l-14 22M445 472l-10 24M523 470v26M604 470v26M680 476l10 26M755 480l18 28" stroke={Y} strokeWidth="5" />
      <path d="M46 450h16M46 457h24M46 463h36M802 450h10M802 460h20" stroke={G} strokeWidth="4" strokeDasharray="9 2" />
      <Note x={456} y={492} />
      <Note x={30} y={512} />
      <Note x={812} y={510} />
      <g transform="translate(0 495)">
        <path d="M90 27Q280 8 430 8T780 27" stroke={B} strokeWidth="12" fill="none" />
        <path d="M25 34Q230 2 430 1T850 34" stroke={Y} strokeWidth="5" fill="none" />
        <path d="M90 22Q280-4 430-4T780 22" stroke={Y} strokeWidth="4" fill="none" />
        <path d="M110 30Q280 12 430 12T770 32" stroke={C} strokeWidth="2" strokeDasharray="8 14" fill="none" />
        <path d="M70 30H840M230 112H820M60 112H230" stroke={W} strokeWidth="3" strokeDasharray="8 4" />
        <path d="M120 38H756M800 36h38v42h-38" stroke={W} strokeWidth="3" fill="none" />
        <path d="M845 26v56h-50" stroke={W} strokeWidth="3" strokeDasharray="5 3" fill="none" />
        <path d="M218 38q12 22 38 22t38-22" stroke={W} strokeWidth="3" strokeDasharray="5 4" fill="none" />
        <path d="M115 42L236 88L288 127L350 129L430 136L520 125L560 104L640 68L760 40" stroke={Y} strokeWidth="4" fill="none" />
        <path d="M168 68l48 18M580 96l34-14M650 70l46-6M386 36l14 6 14-6zM400 127h34" stroke={W} strokeWidth="7" />
        <path d="M66 25h50v37H66zM544 101h43v39h-43zM760 25h42v58h-42z" fill={B} />
        <path d="M70 56L104 28M82 60L114 34M548 136l34-30M564 138l22-20" stroke="#000060" strokeWidth="3" />
        <path d="M764 28l36 42" stroke={C} strokeWidth="2" />
        <Note x={345} y={34} />
        <Note x={445} y={24} />
        <Note x={130} y={108} />
        <Note x={345} y={124} />
        <Note x={652} y={108} />
        <path d="M384 115h14M386 255h30" stroke={G} strokeWidth="7" />
        <text x="284" y="68" fill={C} fontSize="13" fontFamily="Liberation Sans">Detail 2</text>
        <text x="26" y="77" fill={C} fontSize="11" fontFamily="Liberation Sans">Detail 1</text>
        <Legs x={84} y={62} a={-12} b={8} />
        <Legs x={564} y={140} a={-20} b={24} />
        <Legs x={780} y={82} a={4} b={20} />
        <path d="M75 223L792 307" stroke={Y} strokeWidth="3" strokeDasharray="26 4 4 4" />
        <path d="M616 232v24h-14" stroke={C} strokeWidth="3" strokeDasharray="9 4" fill="none" />

        <g fontSize="13" fontFamily="Liberation Sans">
          <text x="68" y="272" fill={C}>Detail 1</text>
          <text x="527" y="336" fill={C}>Detail 3</text>
        </g>
        <g fontSize="9" fontFamily="Liberation Sans" fill={G}>
          <text x="66" y="299">Section C-C</text>
          <text x="212" y="299">Section D-D</text>
        </g>
        <path d="M68 281h12M528 343h12M118 323h14M228 322h12M310 322h14M118 433h14M226 433h14M310 433h14" stroke={G} strokeWidth="6" />
        <path d="M66 355V332q20-6 38-2h36M100 315v40M112 330v26M56 367h10M118 396L134 426H180" stroke={W} strokeWidth="3" fill="none" />
        <path d="M66 357h50v45H66zM110 352h30v14h-30z" fill={B} />
        <path d="M94 370h16v20H94zM70 402l-4 18M80 402l-4 18M90 402l-4 18M100 402l-4 18M110 402l-4 18" stroke={W} strokeWidth="3" fill="none" />
        <path d="M116 372l12 20M150 362v40M128 392h20M144 408h38M144 418h38M144 424h30" stroke={Y} strokeWidth="5" fill="none" />
        <path d="M232 322h-8v20M316 322h-6v24M310 408v22M232 402v26M118 400v28" stroke={G} strokeWidth="3" fill="none" />
        <path d="M212 336h18l-9 10z" fill={W} />
        <path d="M219 346v60M310 350v50" stroke={W} strokeWidth="3" strokeDasharray="6 3" />
        <path d="M219 359h102v12H219zM306 340h6v20h-6z" fill={B} />
        <path d="M219 374h100v26H219zM274 356h34" stroke={Y} strokeWidth="4" fill="none" />
        <path d="M222 371h96" stroke={C} strokeWidth="2" strokeDasharray="6 6" />
        <path d="M527 388h108v38H527z" fill={B} />
        <path d="M527 388h60M610 387h24M570 430l60-6" stroke={C} strokeWidth="3" />
        <path d="M527 384v50M635 380v50M550 442L674 331" stroke={W} strokeWidth="3" strokeDasharray="8 3" />
        <path d="M560 430L662 344L652 356L574 428z" fill={G} stroke={G} strokeWidth="3" />
      </g>
    </g>
  );
}

function CrossSection() {
  const lines = Array.from({ length: 14 }, (_, i) => 547 + i * 6);
  return (
    <g transform="translate(670 160) scale(.33333)">
      <text x="78" y="49" fill={C} fontSize="12" fontFamily="Liberation Sans">Section A-A</text>
      <path d="M208 76h-12v58M196 648v76h12" stroke={C} strokeWidth="3" strokeDasharray="9 4" fill="none" />
      {[85, 304].map((x) => (
        <g key={x}>
          <path d={`M${x} 66l7 8-7 8-7-8z`} fill={G} />
          <path d={`M${x} 82V640`} stroke={W} strokeWidth="3" strokeDasharray="9 4" />
          <path d={`M${x - 4} 138h8v37h-8zM${x - 7} 175V574M${x + 6} 175V574`} stroke={Y} strokeWidth="3" fill="none" />
          <path d={`M${x - 6} 576v58M${x + 6} 576v58`} stroke={W} strokeWidth="3" strokeDasharray="7 4" />
        </g>
      ))}
      <path d="M92 190h206M92 196h206M92 224h206M92 229h206M195 190v40" stroke={W} strokeWidth="3" />
      <path d="M98 198L190 224M190 198L98 224M202 198L292 224M292 198L202 224" stroke={W} strokeWidth="2" />
      <path d="M95 345v110M103 390v160M286 390v160M294 355v100M98 452h190M98 460h190M98 543h190M98 552h190M98 562h190" stroke={W} strokeWidth="3" />
      <path d="M95 448h12M110 456h16M180 456h24M276 456h14M105 386h8M278 386h10M186 543h18M186 551h18M186 561h18M92 540h18M282 540h16" stroke={Y} strokeWidth="6" />
      <path d="M95 495h28v14H95zM123 500h122v9H123zM245 495h50v14h-50z" fill={B} />
      <path d="M125 499h118" stroke={W} strokeWidth="3" />
      <path d="M52 503h26M60 490h18M66 485v24" stroke={Y} strokeWidth="8" />
      <path d="M94 495v16M296 495v14" stroke={C} strokeWidth="4" />
      <circle cx="120" cy="503" r="31" stroke={W} strokeWidth="2" strokeDasharray="5 4" fill="none" />
      <circle cx="272" cy="503" r="31" stroke={W} strokeWidth="2" strokeDasharray="5 4" fill="none" />
      <path d="M105 523h110" stroke={W} strokeWidth="3" strokeDasharray="6 3" />
      <path d="M140 534h70M172 580h46" stroke={W} strokeWidth="7" strokeDasharray="11 2" />
      <path d="M40 472h38M210 472h36" stroke={C} strokeWidth="7" strokeDasharray="14 3" />
      <path d="M54 574h276" stroke={Y} strokeWidth="3" />
      <path d="M65 598h262v36H65z" stroke={W} strokeWidth="3" strokeDasharray="7 4" fill="none" />
      <path d="M78 634L60 715M92 634L72 706M298 634L320 706M312 634L328 715" stroke={W} strokeWidth="4" strokeDasharray="8 4" />

      <text x="22" y="774" fill={C} fontSize="11" fontFamily="Liberation Sans">Detail 1 (2:1)</text>
      <path d="M26 780h12" stroke={G} strokeWidth="6" />
      <path d="M24 800h60M24 806h50M24 812h58M24 824h18M24 832h20M24 840h24M24 848h40M104 812h36M104 818h20M260 808h34M276 842h46M274 906h44M104 914h36M104 928h30M104 940h36M170 912h36M170 926h30M170 938h40M200 946h76" stroke={W} strokeWidth="4" />
      <path d="M24 817h70L140 862M92 842l20 24M104 820l36 42M242 860V780l6 20v40M260 812l-10 20M290 842l-36 14M98 896v40M164 896v52M234 896h18l-12 18zM240 914l-20 40M256 896l18 12" stroke={W} strokeWidth="3" fill="none" />
      <path d="M235 800v62" stroke={Y} strokeWidth="6" />
      <path d="M81 874h58v-13h118q8 0 8 16t-10 19H81z" fill={B} />
      <path d="M84 871h54" stroke={G} strokeWidth="5" />
      <path d="M144 866h90" stroke={G} strokeWidth="3" strokeDasharray="3 8" />
      <path d="M120 892h60M250 862v34" stroke={C} strokeWidth="2" strokeDasharray="4 4" />

      <path d="M352 24h202v608H352zM352 466h202M352 511h202M352 541h202M352 642h202v14H352zM352 660h202v158H352zM352 822h202v13H352zM352 841h202v132H352z" stroke={G} strokeWidth="3" fill="none" />
      <path d="M354 470h60M356 484h20M356 490h30M356 499h80M468 490h12M490 486h36M468 504h12M356 651h106M356 681h22" stroke={Y} strokeWidth="4" />
      <path d="M352 478h202M488 478v33M374 541v88M523 541v88M536 541v88M354 829h24M352 874h202M352 897h202M352 910h202M372 906h-20M386 918h-34M352 955h202M404 955v18M450 955v18M502 955v18" stroke={W} strokeWidth="3" />
      {lines.map((y) => (
        <path key={y} d={`M354 ${y}h198`} stroke={W} strokeWidth="3" />
      ))}
      <path d="M354 627h200" stroke={Y} strokeWidth="2" />
      <path d="M470 651h48M354 672h54M388 887h18M388 905h48M388 930h48M388 940h62M528 966h18" stroke={G} strokeWidth="6" strokeDasharray="11 2" />
      <path d="M358 968h34M410 968h30M456 968h40" stroke={Y} strokeWidth="7" strokeDasharray="7 6" />
    </g>
  );
}

function Canvas() {
  return (
    <div className="min-h-0 flex-1 bg-black">
      <svg viewBox="252 160 754 331" preserveAspectRatio="xMidYMid meet" className="block size-full" shapeRendering="crispEdges" role="img" aria-label="Cable-stayed bridge drawing" fill="none">
        <path d="M399.5 164.5h459v324h-459z" stroke={W} />
        <path d="M401.5 166.5h455v320h-455z" stroke={C} />
        <path d="M785.5 165v323" stroke={W} />
        <Elevation />
        <CrossSection />
        <path d="M945 168.5h61" stroke="#f00" />
        <path d="M995.5 160v58" stroke={G} />
        <path d="M992.5 165.5h6v6h-6z" stroke="#f00" />
        <path d="M266.5 475v-28M266.5 438l-3 9h6z" stroke={G} />
        <path d="M270 477.5h24M303 477.5l-9-3v6z" stroke="#f00" />
        <path d="M263.5 474.5h6v6h-6z" stroke={W} />
        <text x="263" y="434" fill="#ddd" fontSize="9" fontFamily="Liberation Sans">Y</text>
        <text x="310" y="481" fill="#ddd" fontSize="9" fontFamily="Liberation Sans">X</text>
      </svg>
    </div>
  );
}

function LayoutTabs() {
  const nav: [string, string][] = [
    ["First layout", "M3.5 1v8M9 1L5 5l4 4z"],
    ["Previous layout", "M7 1L3 5l4 4z"],
    ["Next layout", "M3 1l4 4-4 4z"],
    ["Last layout", "M2 1l4 4-4 4zM7.5 1v8"],
    ["Add layout", "M5 .5v9M.5 5h9M5 1v8M1 4.5h8"],
  ];
  return (
    <div className="flex h-[18px] shrink-0 items-stretch bg-[#f0f0f0] font-['Liberation_Sans',sans-serif] text-[11px]">
      {nav.map(([n, d]) => (
        <button key={n} type="button" aria-label={n} className="flex w-[16px] items-center justify-center border border-l-0 border-[#9a9a9a]">
          <Svg s={10}><path d={d} fill="#000" stroke="#000" /></Svg>
        </button>
      ))}
      <Svg s={10} h={18} className="bg-white"><path d="M1 0l8 17" stroke="#000" /></Svg>
      <button type="button" className="bg-white px-[2px] text-[11px] font-bold">Model</button>
      <Svg s={12} h={18} className="bg-white"><path d="M11 0L2 17" stroke="#000" /></Svg>
      <button type="button" className="border-t border-black pl-[4px] pr-[2px]">Layout1</button>
      <Svg s={12} h={18}><path d="M11 0L2 17" stroke="#000" /></Svg>
    </div>
  );
}

/* ---------- tool palettes ---------- */

function Ruler({ y }: { y: number }) {
  return (
    <g>
      <path d={`M0 ${y}h32v7H0z`} fill="#fdbb4a" />
      <path d={`M1.5 ${y}v2M4.5 ${y}v2M7.5 ${y}v2M10.5 ${y}v4M13.5 ${y}v2M16.5 ${y}v2M19.5 ${y}v2M22.5 ${y}v4M25.5 ${y}v2M28.5 ${y}v2M31 ${y}v2`} stroke="#7a5310" />
    </g>
  );
}

const paletteItems: [string, ReactNode][] = [
  ["Distance", <><path d="M4 7h24" stroke={NAVY} strokeWidth="2" /><circle cx="4" cy="7" r="2.5" fill="#fff" stroke="#e11" strokeWidth="1.2" /><circle cx="28" cy="7" r="2.5" fill="#fff" stroke="#e11" strokeWidth="1.2" /><Ruler y={22} /></>],
  ["Area", <><path d="M2.5-4.500h25v7a7 7 0 1 1-9 8h-16z" fill="#1d9147" stroke="#0c5d29" /><path d="M12 1h6v4h-6z" fill="#fff" /><Ruler y={22} /></>],
  ["Mass Properties", <><circle cx="16" cy="6" r="8.500" stroke="#0c6b30" strokeWidth="8" /><circle cx="16" cy="6" r="8" stroke="#33a95a" strokeWidth="4" /><Ruler y={22} /></>],
  ["ID Coordinates", <><path d="M16-2v16M8 6h16" stroke={NAVY} strokeWidth="2" /><circle cx="16" cy="6" r="2.5" fill="#fff" stroke="#e11" strokeWidth="1.2" /><Ruler y={22} /></>],
  ["", null],
  ["List Entity Info", <><path d="M17-1l14 6v16l-11 2L8 18z" fill="#d9eef4" stroke="#1b7d44" strokeWidth="1.3" /><path d="M31 5L20 23M17-1L8 18" stroke="#1b7d44" strokeWidth="1.3" /><InfoDot x={7} y={23} /></>],
  ["Variable Setting", <><path d="M2.500-.5h17l5 5v24h-22z" fill="#fff" stroke="#666" /><path d="M18.500-.5v6h6" stroke="#666" /><path d="M14 22l5 5 10-10" stroke="#2a9d77" strokeWidth="3.5" /></>],
  ["Drawing Status", <><path d="M2.5 .5h23v28h-23z" fill="#fff" stroke="#666" /><path d="M2 0h24v4H2z" fill="#2f6fb5" /><path d="M7 7.500h13M7 9.500h13M7 11.500h13M7 13.500h13M7 15.500h13M7 17.500h11M7 19.500h9M7 21.500h9M7 23.500h9" stroke="#777" /><InfoDot x={23} y={23} /></>],
  ["Time Variables", <><circle cx="16" cy="14" r="12.5" fill="#fff" stroke="#555" strokeWidth="2" /><path d="M16 4v10" stroke="#2667b3" strokeWidth="2" /></>],
];

function ToolPalettes() {
  const tab = "flex w-full items-center justify-center border-b border-[#8a8a8a]";
  const vert = "rotate-180 whitespace-nowrap [writing-mode:vertical-rl]";
  return (
    <aside className="flex w-[206px] shrink-0 flex-col overflow-hidden font-['Liberation_Sans',sans-serif]">
      <PanelTitle>Tool Palettes - All P...</PanelTitle>
      <div className="flex min-h-0 flex-1 rounded-b-[4px] bg-[#f0f0f0] pb-[3px] pl-[2px] pr-[2px] pt-[2px]">
        <div className="flex w-[17px] shrink-0 flex-col text-[12px] leading-[16px]">
          <button type="button" className={`${tab} h-[129px] border-l border-l-white`}><span className={vert}>BackToCAD Training</span></button>
          <button type="button" className={`${tab} h-[58px]`}><span className={vert}>Modify</span></button>
          <button type="button" className={`${tab} h-[59px] border border-[#8a8a8a] bg-linear-to-b from-[#fde0b4] to-[#fdb954]`}><span className={vert}>Inquiry</span></button>
          <button type="button" className={`${tab} h-[42px]`}><span className={vert}>Order</span></button>
          <button type="button" aria-label="More palettes" className="flex min-h-0 w-full flex-1 items-center justify-center border border-[#a9a9a9] bg-[#dcdcdc]">
            <Svg s={3} h={9}><path d="M1.5 0v2M1.5 3.500v2M1.5 7v2" stroke="#3b73b9" strokeWidth="1.5" /></Svg>
          </button>
        </div>
        <div className="flex min-w-0 flex-1 overflow-hidden border border-[#7d7d85]">
          <ul className="min-w-0 flex-1 pl-[4px]">
            {paletteItems.map(([name, icon], i) =>
              icon === null ? (
                <li key={i} className="flex h-[38px] items-center pl-[8px]"><span className="h-px w-[144px] bg-[#d2b06a]" /></li>
              ) : (
                <li key={name}>
                  <button type="button" className="flex h-[38px] w-full items-center gap-[3px] text-[11px]">
                    <svg width="32" height="36" viewBox="0 -5 32 36" fill="none" aria-hidden="true" className="shrink-0">{icon}</svg>
                    {name}
                  </button>
                </li>
              ),
            )}
          </ul>
          <div className="flex w-[15px] shrink-0 flex-col items-center justify-between bg-[#f0f0f0]">
            <button type="button" aria-label="Scroll up" className="flex h-[17px] items-center"><Svg s={9} h={6}><path d="M1 5l3.5-4L8 5" stroke="#444" strokeWidth="1.5" /></Svg></button>
            <div className="w-full flex-1 pb-[31px]"><div className="h-full bg-[#cdcdcd]" /></div>
            <button type="button" aria-label="Scroll down" className="flex h-[18px] items-center"><Svg s={9} h={6}><path d="M1 1l3.500 4L8 1" stroke="#444" strokeWidth="1.5" /></Svg></button>
          </div>
        </div>
      </div>
    </aside>
  );
}

/* ---------- command line & status bar ---------- */

function CommandLine() {
  return (
    <div className="flex h-[36px] shrink-0 bg-white font-['Liberation_Mono',monospace]">
      <div className="flex w-[20px] shrink-0 flex-col items-center justify-between bg-[#a0a0a0] py-[5px]">
        <button type="button" aria-label="Close command line"><Svg s={8}><path d="M0 0l8 8M8 0L0 8" stroke="#000" strokeWidth="1.5" /></Svg></button>
        <button type="button" aria-label="Command history"><svg width="10" height="5" viewBox="0 0 10 5" aria-hidden="true" className="block"><path d="M0 0h10L5 5z" /></svg></button>
      </div>
      <div className="flex min-w-0 flex-1 flex-col border-l border-t border-[#777] pl-[2px]">
        <div className="flex h-[15px] items-center border-b border-[#8d8d8d] text-[13px] leading-[14px]">
          <span className="flex-1">Command: ZOOM</span>
          <span className="flex h-full w-[15px] flex-col items-center justify-between bg-[#f0f0f0] py-[3px]">
            <Svg s={5} h={3}><path d="M0 3l2.5-3L5 3z" fill="#555" /></Svg>
            <Svg s={5} h={2}><path d="M0 0h5L2.5 2z" fill="#555" /></Svg>
          </span>
        </div>
        <label className="flex h-[17px] items-center text-[12px]">
          Command:
          <input type="text" aria-label="Command" className="h-[15px] min-w-0 flex-1 px-1 outline-none" />
        </label>
      </div>
    </div>
  );
}

const Tri = () => <path d="M10 2l2 8 7 6.500L10 14l-9 2.500L8 10z" fill="#e4e9ee" />;

const statusIcons: [string, boolean, ReactNode][] = [
  ["Grid display mode", true, <><path d="M0 20L20 0v20z" fill="#fff" /><path d="M0 10h9M11 10h9" stroke="#e33" strokeWidth="1.3" /><path d="M10 1v7M10 12v8" stroke="#1a9a7a" strokeWidth="1.3" /><path d="M12 10h8" stroke="#23c4dd" strokeWidth="1.3" /><path d="M8.5 8.5h3v3h-3z" stroke="#e33" /></>],
  ["Cursor", false, <><path d="M2 12.5h18" stroke="#e22" /><path d="M11.5 1v18" stroke="#1d9a4a" /><path d="M10 11h3v3h-3z" fill="#333" stroke="#e55" /></>],
];

const statusIcons2: [string, boolean, ReactNode][] = [
  ["Annotation visibility", true, <><Tri /><path d="M14 6a4 4 0 0 0-2 7l1 5h3l1-5a4 4 0 0 0-3-7z" fill="#fff06a" stroke="#8d8020" strokeWidth=".7" /></>],
  ["Auto scale", false, <><Tri /><path d="M18 1l-6 6h3l-2 5 6-7h-3z" fill="#8d7a5c" /></>],
  ["Snap", false, <><path d="M3 4h2v2H3zM9 4h2v2H9zM15 4h2v2h-2zM3 9h2v2H3zM9 9h2v2H9zM15 9h2v2h-2zM9 15h2v2H9zM15 15h2v2h-2z" fill="#eee" /><path d="M2.5 14.5h3v3h-3z" fill="#fff" stroke="#e22" strokeWidth="1.5" /></>],
  ["Grid", false, <path d="M5.5 1v18M10.5 1v18M15.5 1v18M1 5.5h18M1 10.5h18M1 15.5h18" stroke="#e8eaec" strokeWidth="1.2" />],
  ["Dynamic input", true, <><path d="M5.5 2v7M2 5.5h7" stroke="#333" strokeWidth="1.3" /><path d="M8 12.5h10v4H8z" fill="#222" /></>],
  ["Ortho", false, <><path d="M3.5 1v17" stroke="#1d9a4a" strokeWidth="1.5" /><path d="M3 18h16" stroke="#e22" strokeWidth="1.3" /><path d="M4 12.5h5V18" stroke="#ddd" strokeWidth="1.3" /></>],
  ["Polar", false, <><circle cx="10" cy="10" r="7.5" stroke="#d8dadd" strokeWidth="1.5" /><path d="M10 10L17 3M10 10h8M14 6l2 4" stroke="#e22" strokeWidth="1.5" /></>],
  ["Object snap", true, <><path d="M4.5 4.5h12v12h-12z" stroke="#333" strokeWidth="1.3" /><path d="M1.5 1.5h4v4h-4z" fill="#bbb" stroke="#e22" strokeWidth="1.5" /></>],
  ["Object tracking", true, <path d="M3 17L16 3M3 16.5h14M8 6l6 6M13 7l-5 5" stroke="#222" strokeWidth="1.2" />],
  ["Lineweight", false, <><path d="M1 3.5h18M1 9.5h18M1 15.5h18" stroke="#fff" /><path d="M3 4h6M1 10h9M1 16h8" stroke="#fff" strokeWidth="3" /></>],
];

function StatusButton({ label, on, children }: { label: string; on: boolean; children: ReactNode }) {
  return (
    <button type="button" aria-label={label} aria-pressed={on} className="flex h-[28px] w-[30px] shrink-0 items-center justify-center border-l border-[#5a5c62]">
      {on ? (
        <span className="flex size-[23px] items-center justify-center border border-white bg-[#939598]"><Svg>{children}</Svg></span>
      ) : (
        <Svg>{children}</Svg>
      )}
    </button>
  );
}

function StatusBar() {
  return (
    <footer className="flex h-[31px] shrink-0 items-center bg-linear-to-b from-[#3d404e] via-[#383a42] via-30% to-[#303030] to-31% text-[11px] text-white">
      <span className="flex-1 pl-[4px]">Ready</span>
      <span className="flex h-[26px] w-[184px] shrink-0 items-center border-l border-[#5a5c62] pl-[3px]">9424.3527,-22402.6332,0.0000</span>
      {statusIcons.map(([l, on, d]) => <StatusButton key={l} label={l} on={on}>{d}</StatusButton>)}
      <button type="button" className="flex h-[28px] w-[50px] shrink-0 items-center gap-[4px] border-l border-[#5a5c62] pl-[6px]">
        <Svg s={20}><Tri /></Svg>1:1
      </button>
      {statusIcons2.map(([l, on, d]) => <StatusButton key={l} label={l} on={on}>{d}</StatusButton>)}
      <button type="button" className="h-[28px] w-[44px] shrink-0 border-l border-[#5a5c62]">MODEL</button>
      <button type="button" className="h-[28px] w-[42px] shrink-0 border-l border-[#5a5c62] text-[#8b8d90]">TABLET</button>
      <button type="button" aria-label="Settings" className="flex h-[28px] w-[30px] shrink-0 items-center justify-center border-l border-[#5a5c62]"><GearIcon size={20} hole="#303030" /></button>
      <StatusButton label="License" on={false}><circle cx="10" cy="6" r="3.5" stroke="#d5d7da" strokeWidth="2.5" /><path d="M6.5 11h7v8L10 16.500 6.500 19z" fill="#d5d7da" /></StatusButton>
      <Svg s={8} h={28}><path d="M6 19h2v2H6zM6 23h2v2H6zM2 23h2v2H2z" fill="#aaa" /></Svg>
    </footer>
  );
}

export default function App() {
  const stripBg = "bg-linear-to-r from-[#a4aab3] via-[#9298a2] to-[#7e858f]";
  return (
    <div className="flex h-screen min-h-[560px] flex-col overflow-hidden border-l-[3px] border-[#414a60] bg-[#555] font-['Open_Sans','Noto_Sans',sans-serif] text-black">
      <TitleBar />
      <MenuBar />
      <Ribbon />
      <main className="flex min-h-0 flex-1 border-t-[4px] border-[#484848]">
        <div className="flex w-[34px] shrink-0 flex-col overflow-hidden">
          <div className={`flex min-h-0 flex-1 rounded-[3px] pr-[4px] ${stripBg}`}><ToolStrip tools={leftTools} /></div>
          <div className={`flex h-[41px] shrink-0 rounded-[3px] pr-[4px] ${stripBg}`}><ToolStrip tools={[["Regenerate", <Regen />, true], null]} /></div>
        </div>
        <div className="flex min-w-0 flex-1 flex-col">
          <DocTabs />
          <div className="flex min-h-0 flex-1 pl-px">
            <PropertiesPanel />
            <div className="ml-[4px] mr-[4px] flex min-w-0 flex-1 flex-col">
              <Canvas />
              <LayoutTabs />
            </div>
            <ToolPalettes />
          </div>
        </div>
        <div className={`ml-px flex w-[31px] shrink-0 rounded-[3px] ${stripBg}`}><ToolStrip tools={rightTools} /></div>
      </main>
      <div className="h-[4px] shrink-0 bg-[#555]" />
      <CommandLine />
      <StatusBar />
    </div>
  );
}
